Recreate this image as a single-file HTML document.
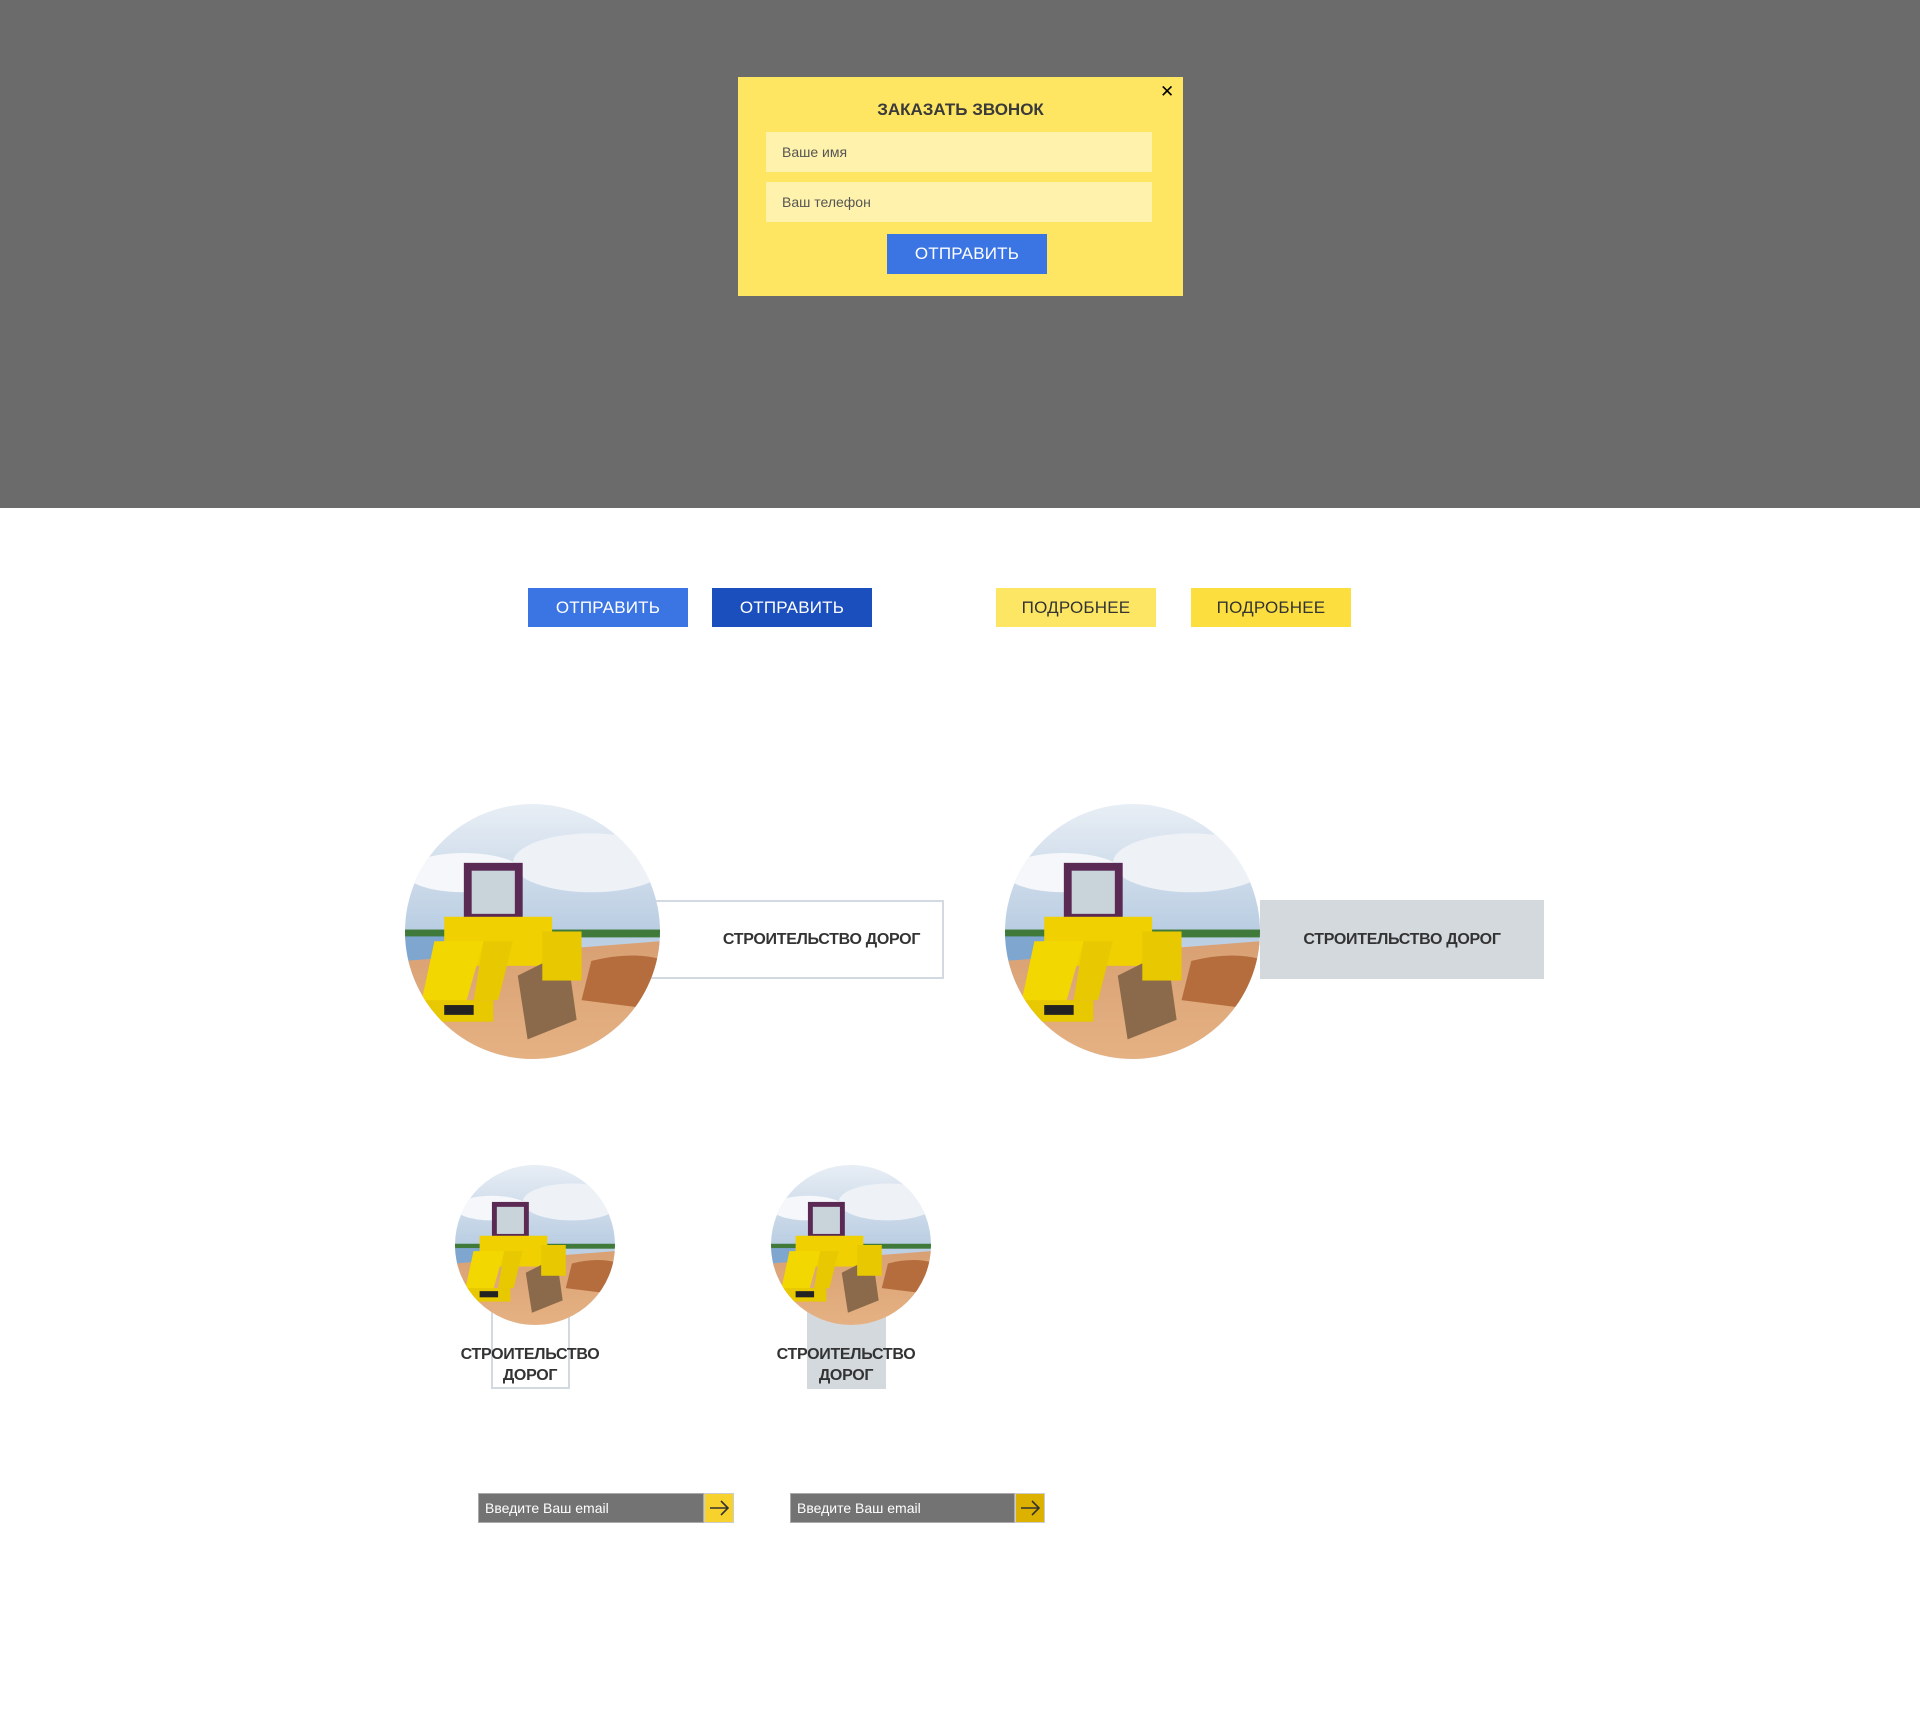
<!DOCTYPE html>
<html><head><meta charset="utf-8"><style>
*{margin:0;padding:0;box-sizing:border-box}
body{width:1920px;height:1735px;background:#fff;position:relative;font-family:"Liberation Sans","DejaVu Sans",sans-serif;overflow:hidden}
.a{position:absolute}
.gray{left:0;top:0;width:1920px;height:508px;background:#6b6b6b}
.modal{left:738px;top:77px;width:445px;height:219px;background:#fee562}
.inp{background:#fff2ad;color:#555;font-size:14px;padding-left:16px;display:flex;align-items:center}
.btn{display:flex;align-items:center;justify-content:center;font-size:17px;letter-spacing:0.2px}
.b1{background:#3b75e3;color:#fff}
.b2{background:#1c4fbe;color:#fff}
.y1{background:#fde664;color:#333}
.y2{background:#fcdf3f;color:#333}
.lbl{display:flex;align-items:center;justify-content:center;font-weight:bold;font-size:16px;letter-spacing:-0.3px;color:#333;text-align:center;line-height:21px}
.circ{border-radius:50%;overflow:hidden}
.em{background:#737373;color:#fff;font-size:14px;padding-left:6px;display:flex;align-items:center;border:1px solid #aaa}
</style></head><body>
<svg width="0" height="0" style="position:absolute"><defs>
<symbol id="doz" viewBox="0 0 260 260">
<defs><linearGradient id="sk" x1="0" y1="0" x2="0" y2="1"><stop offset="0" stop-color="#e8eef5"/><stop offset="0.5" stop-color="#b9cde2"/><stop offset="1" stop-color="#dfe7ef"/></linearGradient>
<linearGradient id="sd" x1="0" y1="0" x2="0" y2="1"><stop offset="0" stop-color="#d9a173"/><stop offset="1" stop-color="#e5b183"/></linearGradient></defs>
<rect width="260" height="260" fill="url(#sk)"/>
<ellipse cx="60" cy="70" rx="60" ry="20" fill="#f5f7fa"/><ellipse cx="190" cy="60" rx="80" ry="30" fill="#eef2f7"/>
<rect x="0" y="128" width="260" height="8" fill="#3f7a3a"/>
<rect x="0" y="135" width="60" height="30" fill="#7fa6cf"/>
<path d="M0 160 L260 140 L260 260 L0 260Z" fill="url(#sd)"/>
<path d="M190 160 Q230 150 260 158 L260 210 L180 200Z" fill="#b56d3d"/>
<rect x="60" y="60" width="60" height="60" fill="#5a2a55"/>
<rect x="68" y="68" width="44" height="44" fill="#c9d4da"/>
<rect x="40" y="115" width="110" height="50" fill="#f0d000"/>
<path d="M30 140 L80 140 L60 210 L15 210Z" fill="#f3d700"/>
<path d="M80 140 L110 140 L95 200 L70 200Z" fill="#e8c800"/>
<rect x="20" y="200" width="70" height="22" fill="#e8c800"/>
<rect x="40" y="205" width="30" height="10" fill="#222"/>
<path d="M115 175 L165 150 L175 220 L125 240Z" fill="#8a6a4a"/>
<rect x="140" y="130" width="40" height="50" fill="#e8c800"/>
</symbol></defs></svg>

<div class="a gray"></div>
<div class="a modal">
 <div class="a" style="left:0;width:445px;top:23px;text-align:center;font-weight:bold;font-size:17px;color:#3a3a3a">ЗАКАЗАТЬ ЗВОНОК</div>
 <div class="a" style="left:422px;top:5px;font-weight:bold;font-size:17px;color:#000">✕</div>
 <div class="a inp" style="left:28px;top:55px;width:386px;height:40px">Ваше имя</div>
 <div class="a inp" style="left:28px;top:105px;width:386px;height:40px">Ваш телефон</div>
 <div class="a btn b1" style="left:149px;top:157px;width:160px;height:40px">ОТПРАВИТЬ</div>
</div>

<div class="a btn b1" style="left:528px;top:588px;width:160px;height:39px">ОТПРАВИТЬ</div>
<div class="a btn b2" style="left:712px;top:588px;width:160px;height:39px">ОТПРАВИТЬ</div>
<div class="a btn y1" style="left:996px;top:588px;width:160px;height:39px">ПОДРОБНЕЕ</div>
<div class="a btn y2" style="left:1191px;top:588px;width:160px;height:39px">ПОДРОБНЕЕ</div>

<div class="a lbl" style="left:649px;top:900px;width:295px;height:79px;border:2px solid #d3d9e0;padding-left:50px">СТРОИТЕЛЬСТВО ДОРОГ</div>
<div class="a circ" style="left:405px;top:804px;width:255px;height:255px"><svg width="255" height="255"><use href="#doz"/></svg></div>

<div class="a lbl" style="left:1260px;top:900px;width:284px;height:79px;background:#d4d9de;padding-left:0px">СТРОИТЕЛЬСТВО ДОРОГ</div>
<div class="a circ" style="left:1005px;top:804px;width:255px;height:255px"><svg width="255" height="255"><use href="#doz"/></svg></div>

<div class="a" style="left:491px;top:1300px;width:79px;height:89px;border:2px solid #d3d9e0"></div>
<div class="a" style="left:807px;top:1300px;width:79px;height:89px;background:#d4d9de"></div>
<div class="a circ" style="left:455px;top:1165px;width:160px;height:160px"><svg width="160" height="160"><use href="#doz"/></svg></div>
<div class="a circ" style="left:771px;top:1165px;width:160px;height:160px"><svg width="160" height="160"><use href="#doz"/></svg></div>
<div class="a lbl" style="left:430px;top:1344px;width:200px;height:42px">СТРОИТЕЛЬСТВО<br>ДОРОГ</div>
<div class="a lbl" style="left:746px;top:1344px;width:200px;height:42px">СТРОИТЕЛЬСТВО<br>ДОРОГ</div>

<div class="a em" style="left:478px;top:1493px;width:226px;height:30px">Введите Ваш email</div>
<div class="a" style="left:704px;top:1493px;width:30px;height:30px;background:#f8d22c;border:1px solid #ccc"><svg width="28" height="28" viewBox="0 0 28 28"><path d="M5 14H23M16 7L23 14L16 21" stroke="#333" stroke-width="1.6" fill="none"/></svg></div>
<div class="a em" style="left:790px;top:1493px;width:225px;height:30px">Введите Ваш email</div>
<div class="a" style="left:1015px;top:1493px;width:30px;height:30px;background:#ddb100;border:1px solid #ccc"><svg width="28" height="28" viewBox="0 0 28 28"><path d="M5 14H23M16 7L23 14L16 21" stroke="#333" stroke-width="1.6" fill="none"/></svg></div>
</body></html>
